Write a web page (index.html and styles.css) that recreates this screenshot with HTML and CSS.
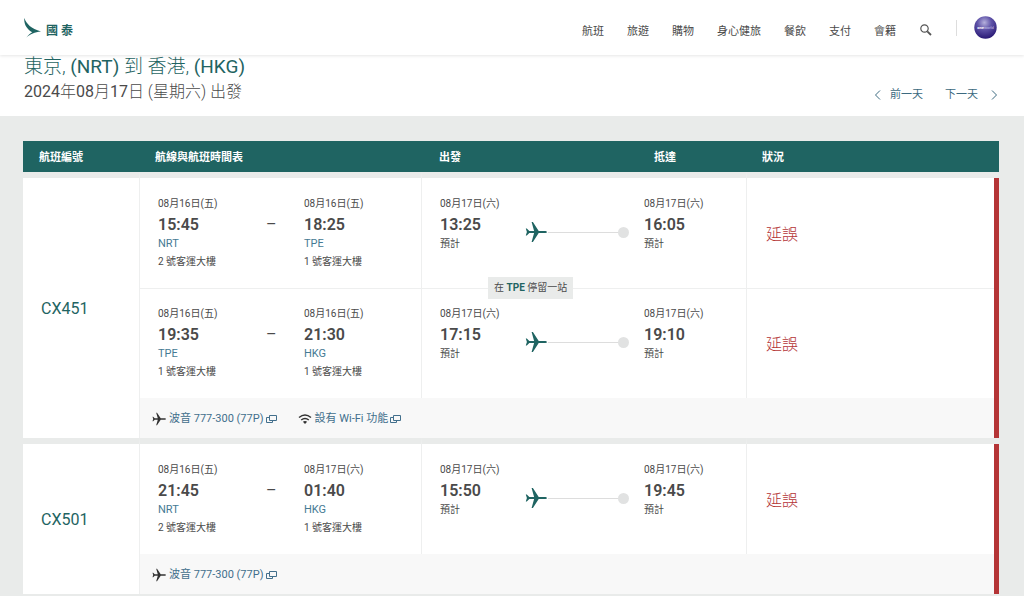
FILE: index.html
```html
<!DOCTYPE html>
<html lang="zh-Hant">
<head>
<meta charset="utf-8">
<title>國泰 航班狀況</title>
<meta name="viewport" content="width=device-width, initial-scale=1">
<link rel="stylesheet" href="styles.css">
</head>
<body>
<svg class="defs" aria-hidden="true">
  <symbol id="plane" viewBox="0 0 22 22"><path d="M22 11c0 .7-1 1.100-2.500 1.100h-5.800L7.900 21H6.600l2.500-8.900H4.300L1.800 14.600H.8L1.900 11 .8 7.400h1l2.500 2.500h4.800L6.600 1h1.300l5.800 8.900h5.800C21 9.900 22 10.300 22 11z"/></symbol>
  <symbol id="popup" viewBox="0 0 11 10"><path d="M3.500 1.500h7v5h-7zM3.500 3.500h-3v5h6v-2" fill="none" stroke="currentColor"/></symbol>
  <symbol id="wifi" viewBox="0 0 14 12"><path d="M1 4.500q6-5 12 0M3.200 7q3.800-3 7.600 0" fill="none" stroke="currentColor" stroke-width="1.500"/><path d="M4.900 8.700q2.100-1.500 4.200 0L7 11z"/></symbol>
</svg>
<header class="site-header">
  <a class="brand" href="#">
    <svg class="brand-mark" viewBox="0 0 17 20" aria-hidden="true"><path d="M.3 0C2.500 6 7 10.500 17 13.600 10.500 14.300 6.500 16 2.200 19.800 4.200 17.200 6 15.600 8.200 14.300 3.200 11.300-.3 6.500.3 0z"/></svg>
    <span>國 泰</span>
  </a>
  <nav class="site-nav">
    <a href="#">航班</a>
    <a href="#">旅遊</a>
    <a href="#">購物</a>
    <a href="#">身心健旅</a>
    <a href="#">餐飲</a>
    <a href="#">支付</a>
    <a href="#">會籍</a>
  </nav>
  <button class="search" type="button" aria-label="搜尋"><svg viewBox="0 0 12 12"><circle cx="4.500" cy="4.500" r="3.700" fill="none" stroke="#555" stroke-width="1.200"/><path d="M7.300 7.300l3.700 3.700" stroke="#555" stroke-width="1.800"/></svg></button>
  <a class="alliance" href="#" aria-label="oneworld">
    <svg viewBox="0 0 23 23">
      <defs><radialGradient id="ball" cx="45%" cy="28%" r="70%"><stop offset="0" stop-color="#b5b0dc"/><stop offset=".45" stop-color="#5f53a8"/><stop offset="1" stop-color="#2c1c78"/></radialGradient></defs>
      <circle cx="11.500" cy="11.500" r="11.200" fill="url(#ball)"/>
      <text x="11.500" y="13" text-anchor="middle" font-size="4" fill="#fff"><tspan font-weight="700">one</tspan><tspan fill="#c9c4e8">world</tspan></text>
    </svg>
  </a>
</header>
<section class="summary">
  <div>
    <h1>東京, <b>(NRT)</b> 到 香港, <b>(HKG)</b></h1>
    <p><b>2024</b>年<b>08</b>月<b>17</b>日 (星期六) 出發</p>
  </div>
  <nav class="day-nav">
    <a href="#"><svg viewBox="0 0 8 10" aria-hidden="true"><path d="M6 .5L1.500 5 6 9.500"/></svg>前一天</a>
    <a class="next" href="#">下一天<svg viewBox="0 0 8 10" aria-hidden="true"><path d="M2 .5L6.500 5 2 9.500"/></svg></a>
  </nav>
</section>
<main>
<table class="flights">
  <colgroup><col class="c-number"><col class="c-route"><col class="c-dep"><col class="c-arr"><col></colgroup>
  <thead>
    <tr><th>航班編號</th><th>航線與航班時間表</th><th class="wide">出發</th><th class="wide">抵達</th><th>狀況</th></tr>
  </thead>
  <tbody>
    <tr class="leg">
      <th class="number" rowspan="3" scope="rowgroup">CX451</th>
      <td>
        <div class="route">
          <div class="point"><span class="date">08月16日(五)</span><span class="time">15:45</span><a href="#">NRT</a><span class="terminal">2 號客運大樓</span></div>
          <span class="dash">–</span>
          <div class="point"><span class="date">08月16日(五)</span><span class="time">18:25</span><a href="#">TPE</a><span class="terminal">1 號客運大樓</span></div>
        </div>
      </td>
      <td>
        <div class="departure">
          <div class="point"><span class="date">08月17日(六)</span><span class="time">13:25</span><span class="estimate">預計</span></div>
          <div class="track"><svg aria-hidden="true"><use href="#plane"/></svg><i class="line"></i><i class="dot"></i></div>
        </div>
      </td>
      <td class="arrival"><div class="point"><span class="date">08月17日(六)</span><span class="time">16:05</span><span class="estimate">預計</span></div></td>
      <td class="status">延誤</td>
    </tr>
    <tr class="leg following">
      <td>
        <div class="route">
          <div class="point"><span class="date">08月16日(五)</span><span class="time">19:35</span><a href="#">TPE</a><span class="terminal">1 號客運大樓</span></div>
          <span class="dash">–</span>
          <div class="point"><span class="date">08月16日(五)</span><span class="time">21:30</span><a href="#">HKG</a><span class="terminal">1 號客運大樓</span></div>
        </div>
      </td>
      <td>
        <div class="departure">
          <span class="stop">在 <b>TPE</b> 停留一站</span>
          <div class="point"><span class="date">08月17日(六)</span><span class="time">17:15</span><span class="estimate">預計</span></div>
          <div class="track"><svg aria-hidden="true"><use href="#plane"/></svg><i class="line"></i><i class="dot"></i></div>
        </div>
      </td>
      <td class="arrival"><div class="point"><span class="date">08月17日(六)</span><span class="time">19:10</span><span class="estimate">預計</span></div></td>
      <td class="status">延誤</td>
    </tr>
    <tr class="details">
      <td colspan="4">
        <div class="features">
          <a class="aircraft" href="#"><svg class="lead" aria-hidden="true"><use href="#plane"/></svg><span>波音 777-300 (77P)</span><svg class="popup" aria-hidden="true"><use href="#popup"/></svg></a>
          <a href="#"><svg class="lead" aria-hidden="true"><use href="#wifi"/></svg><span>設有 Wi-Fi 功能</span><svg class="popup" aria-hidden="true"><use href="#popup"/></svg></a>
        </div>
      </td>
    </tr>
  </tbody>
  <tbody>
    <tr class="leg">
      <th class="number" rowspan="2" scope="rowgroup">CX501</th>
      <td>
        <div class="route">
          <div class="point"><span class="date">08月16日(五)</span><span class="time">21:45</span><a href="#">NRT</a><span class="terminal">2 號客運大樓</span></div>
          <span class="dash">–</span>
          <div class="point"><span class="date">08月17日(六)</span><span class="time">01:40</span><a href="#">HKG</a><span class="terminal">1 號客運大樓</span></div>
        </div>
      </td>
      <td>
        <div class="departure">
          <div class="point"><span class="date">08月17日(六)</span><span class="time">15:50</span><span class="estimate">預計</span></div>
          <div class="track"><svg aria-hidden="true"><use href="#plane"/></svg><i class="line"></i><i class="dot"></i></div>
        </div>
      </td>
      <td class="arrival"><div class="point"><span class="date">08月17日(六)</span><span class="time">19:45</span><span class="estimate">預計</span></div></td>
      <td class="status">延誤</td>
    </tr>
    <tr class="details">
      <td colspan="4">
        <div class="features">
          <a class="aircraft" href="#"><svg class="lead" aria-hidden="true"><use href="#plane"/></svg><span>波音 777-300 (77P)</span><svg class="popup" aria-hidden="true"><use href="#popup"/></svg></a>
        </div>
      </td>
    </tr>
  </tbody>
</table>
</main>
</body>
</html>
```
FILE: styles.css
```css
:root {
  --green: #1f6462;
  --link: #457a94;
  --text: #4a4a4a;
  --page: #e9ebea;
  --rule: #eeefef;
  --red: #b43436;
}
* { box-sizing: border-box; }
body {
  margin: 0;
  background: var(--page);
  color: var(--text);
  font-family: Roboto, "Noto Sans CJK TC", sans-serif;
  font-size: 10px;
  line-height: 14px;
}
a { color: inherit; text-decoration: none; }
svg { display: block; fill: currentColor; flex: none; }
.defs { position: absolute; width: 0; height: 0; }

.site-header {
  position: relative;
  display: flex;
  align-items: center;
  height: 55px;
  padding: 0 27px 0 24px;
  background: #fff;
  box-shadow: 0 1px 3px rgba(0, 0, 0, .1);
}
.brand {
  display: flex;
  align-items: center;
  gap: 5px;
  color: var(--green);
  font-size: 12px;
  font-weight: 700;
}
.brand-mark { width: 17px; height: 20px; }
.brand span { padding-top: 6px; }
.site-nav {
  display: flex;
  gap: 23px;
  margin-left: auto;
  padding-top: 9px;
  font-size: 11px;
}
.search {
  margin: 4px 0 0 24px;
  padding: 0;
  border: 0;
  background: none;
}
.search svg { width: 12px; height: 12px; }
.alliance {
  margin-left: 24px;
  padding-left: 18px;
  background: linear-gradient(#ddd, #ddd) 0 50% / 1px 16px no-repeat;
}
.alliance svg { width: 23px; height: 23px; }

.summary {
  display: flex;
  justify-content: space-between;
  align-items: flex-start;
  min-height: 61px;
  padding: 1px 26px 12px 24px;
  background: #fff;
}
.summary h1 {
  margin: 0;
  color: var(--green);
  font: 300 19px/22px Roboto, "Noto Sans CJK TC", sans-serif;
}
.summary h1 b { font-weight: 400; }
.summary p {
  margin: 3px 0 0;
  font: 300 16px/22px Roboto, "Noto Sans CJK TC", sans-serif;
}
.summary p b { font-weight: 400; }
.day-nav {
  display: flex;
  gap: 22px;
  padding-top: 32px;
  color: #3c6a80;
  font-size: 11px;
}
.day-nav a { display: flex; align-items: center; gap: 8px; }
.day-nav .next { gap: 12px; }
.day-nav svg { width: 8px; height: 10px; fill: none; stroke: currentColor; }

main { padding: 25px 25px 0 23px; }
.flights {
  width: 100%;
  table-layout: fixed;
  border-spacing: 0;
}
.c-number { width: 116px; }
.c-route { width: 282px; }
.c-dep { width: 215px; }
.c-arr { width: 110px; }
thead th {
  height: 31px;
  padding: 2px 16px 0;
  background: var(--green);
  color: #fff;
  font-size: 11px;
  font-weight: 700;
  text-align: left;
}
thead .wide { padding-left: 18px; }
tbody tr:first-child > * { border-top: 6px solid var(--page); }
.number {
  padding: 2px 18px 0;
  background: #fff;
  color: var(--green);
  font-size: 16px;
  font-weight: 400;
  text-align: left;
}
.leg td {
  padding: 19px 0 19px 18px;
  border-left: 1px solid var(--rule);
  background: #fff;
  vertical-align: top;
}
.leg .arrival { padding-left: 8px; border-left: 0; }
.following td { box-shadow: inset 0 1px var(--rule); }
.leg .status {
  padding: 4px 19px 0;
  color: var(--red);
  font-size: 16px;
  font-weight: 300;
  line-height: 20px;
  vertical-align: middle;
}
.status, .details td { box-shadow: inset -5px 0 var(--red); }
.following .status { box-shadow: inset -5px 0 var(--red), inset 0 1px var(--rule); }
.route {
  display: grid;
  grid-template-columns: 108px 38px auto;
}
.point { display: flex; flex-direction: column; }
.point a { color: var(--link); font-size: 11px; }
.time {
  margin-top: 2px;
  font-size: 16px;
  font-weight: 600;
  line-height: 24px;
}
.terminal { margin-top: 4px; }
.dash { padding-top: 16px; font-size: 16px; line-height: 24px; }
.departure {
  position: relative;
  display: flex;
  min-height: 72px;
}
.departure .point { flex: 0 0 85px; }
.track {
  display: flex;
  flex: 1;
  align-items: center;
  padding: 0 7px 2px 0;
  color: var(--green);
}
.track svg { width: 22px; height: 22px; }
.line { flex: 1; height: 1px; margin-left: 1px; background: #ddd; }
.dot { width: 11px; height: 11px; border-radius: 50%; background: #e1e2e2; }
.stop {
  position: absolute;
  top: -30px;
  left: 48px;
  padding: 4px 6px;
  background: var(--page);
  white-space: nowrap;
}
.stop b { color: var(--green); }
.details td {
  height: 40px;
  padding: 2px 12px 0;
  border-left: 1px solid var(--rule);
  background: #f8f8f8;
}
.features { display: flex; gap: 21px; color: #426f8c; font-size: 11px; }
.features a { display: flex; align-items: center; gap: 2px; }
.features .lead { width: 14px; height: 14px; margin-right: 1px; color: #333; }
.features .popup { width: 11px; height: 10px; }
```
